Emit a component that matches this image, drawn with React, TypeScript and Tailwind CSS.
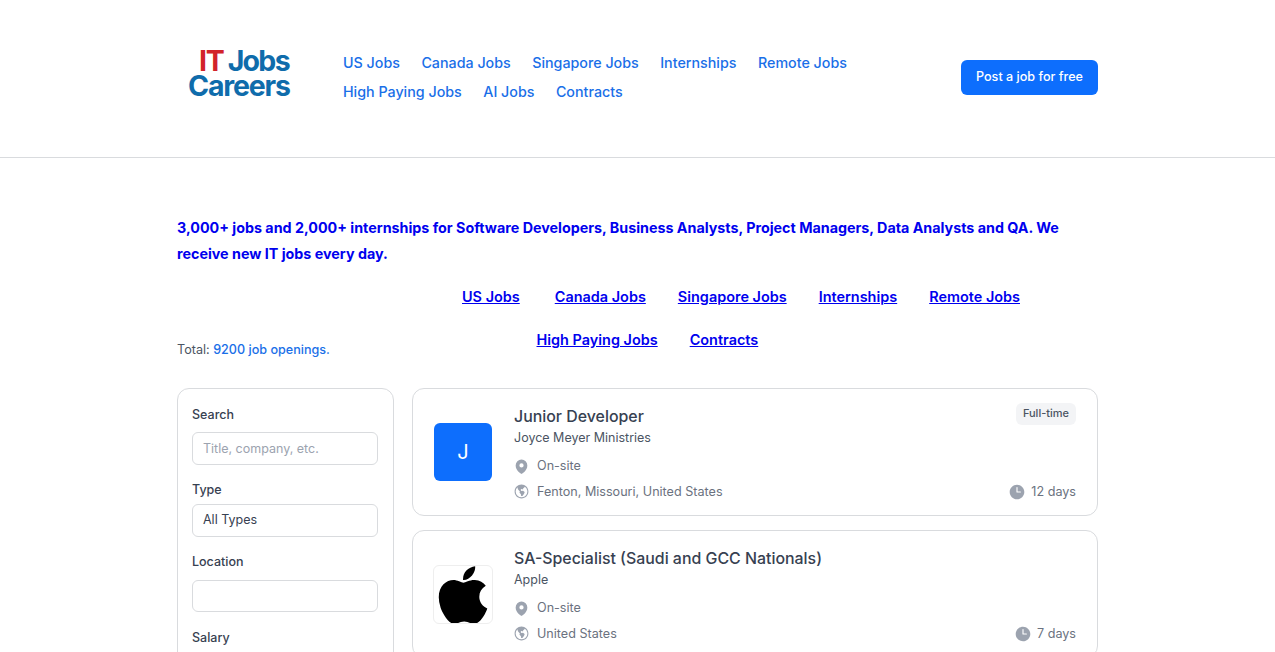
import { HiMapPin, HiGlobeAmericas, HiClock } from "react-icons/hi2";
import { FaApple } from "react-icons/fa";

const navRow1 = ["US Jobs", "Canada Jobs", "Singapore Jobs", "Internships", "Remote Jobs"];
const navRow2 = ["High Paying Jobs", "AI Jobs", "Contracts"];

function Field({ label, children, labelClass }: { label: string; children: React.ReactNode; labelClass: string }) {
  return (
    <div>
      <div className={`text-[12.5px] leading-[20px] font-medium text-[#374151] ${labelClass}`}>{label}</div>
      {children}
    </div>
  );
}

function JobCard({ title, company, place, age, badge, logo }: { title: string; company: string; place: string; age: string; badge?: string; logo: React.ReactNode }) {
  return (
    <div className="relative flex h-[128px] shrink-0 rounded-xl border border-[#d9dbde] bg-white pl-[21px] pr-[21px]">
      <div className="mt-[34px] w-[59px] mr-[21px] shrink-0">{logo}</div>
      <div className="flex-1 pt-[17px]">
        <div className="text-[15.9px] leading-[22px] font-medium text-[#374151]">{title}</div>
        <div className="text-[12.5px] leading-[20px] text-[#4b5563]">{company}</div>
        <div className="mt-[8px] flex h-[20px] items-center text-[12.6px] text-[#6b7280]">
          <HiMapPin className="mr-[7px] -ml-[1px] h-[17px] w-[17px] text-[#9ca3af]" />
          On-site
        </div>
        <div className="mt-[6px] flex h-[20px] items-center justify-between text-[12.6px] text-[#6b7280]">
          <span className="flex items-center">
            <HiGlobeAmericas className="mr-[7px] -ml-[1px] h-[17px] w-[17px] text-[#9ca3af]" />
            {place}
          </span>
          <span className="flex items-center">
            <HiClock className="mr-[5px] h-[18px] w-[18px] text-[#9ca3af]" />
            {age}
          </span>
        </div>
      </div>
      {badge && (
        <div className="absolute right-[21px] top-[14px] rounded-md bg-[#f3f4f6] px-[7px] pt-[1px] pb-[3px] text-[11px] leading-[18px] font-medium text-[#4b5563]">
          {badge}
        </div>
      )}
    </div>
  );
}

export default function App() {
  return (
    <div className="h-[652px] overflow-hidden bg-white font-['Inter',sans-serif]">
      <header className="h-[158px] border-b border-[#d9dbde]">
        <div className="mx-auto flex w-[921px] items-start">
          <div className="mt-[48px] ml-[11px] w-[155px] shrink-0 font-bold text-[#0f6cab] text-[28.5px] leading-[25px] tracking-[-1.2px]">
            <div className="ml-[11px]"><span className="text-[#d2232a]">IT</span><span className="ml-[4px] tracking-[-1.7px]">Jobs</span></div>
            <div>Careers</div>
          </div>
          <nav className="mt-[48px] w-[560px] text-[14.27px] font-medium leading-[29px] text-[#1a6fe8]">
            <div className="flex gap-[21.5px]">{navRow1.map((n) => <span key={n}>{n}</span>)}</div>
            <div className="flex gap-[21.5px]">{navRow2.map((n) => <span key={n}>{n}</span>)}</div>
          </nav>
          <button className="mt-[60px] ml-auto h-[35px] w-[137px] rounded-md bg-[#0d6efd] text-[12.6px] font-medium text-white">
            Post a job for free
          </button>
        </div>
      </header>

      <main className="mx-auto w-[921px]">
        <p className="mt-[57px] text-[14.3px] font-bold leading-[26px] text-[#0000ee]">
          3,000+ jobs and 2,000+ internships for Software Developers, Business Analysts, Project Managers, Data Analysts and QA. We receive new IT jobs every day.
        </p>
        <div className="relative">
          <div className="mt-[17px] ml-[285px] flex gap-[32px] text-[14.45px] leading-[26px] font-semibold text-[#0000ee] underline">
            <span className="mr-[3px]">US Jobs</span><span>Canada Jobs</span><span>Singapore Jobs</span><span>Internships</span><span>Remote Jobs</span>
          </div>
          <div className="mt-[17px] ml-[359.5px] flex gap-[32px] text-[14.45px] leading-[26px] font-semibold text-[#0000ee] underline">
            <span>High Paying Jobs</span><span>Contracts</span>
          </div>
          <div className="absolute left-0 top-[56px] text-[12.6px] leading-[20px] text-[#4b5563]">
            Total: <span className="font-medium text-[#1a6fe8]">9200 job openings.</span>
          </div>
        </div>

        <div className="mt-[35px] flex gap-[18px]">
          <aside className="h-[400px] w-[217px] shrink-0 rounded-xl border border-[#d9dbde] pl-[14px] pr-[15px] pt-[16px]">
            <Field label="Search" labelClass="mb-[7px]">
              <div className="flex h-[33px] items-center rounded-md border border-[#d9dbde] px-[10px] pt-[1px] text-[12.5px] text-[#9ca3af]">Title, company, etc.</div>
            </Field>
            <div className="mt-[15px]">
              <Field label="Type" labelClass="mb-[4px]">
                <div className="flex h-[33px] items-center rounded-md border border-[#d9dbde] px-[10px] text-[12.5px] text-[#374151]">All Types</div>
              </Field>
            </div>
            <div className="mt-[15px]">
              <Field label="Location" labelClass="mb-[8px]">
                <div className="h-[32px] rounded-md border border-[#d9dbde]" />
              </Field>
            </div>
            <div className="mt-[16px]">
              <Field label="Salary" labelClass=""><div /></Field>
            </div>
          </aside>
          <section className="flex flex-1 flex-col gap-[14px]">
            <JobCard
              title="Junior Developer"
              company="Joyce Meyer Ministries"
              place="Fenton, Missouri, United States"
              age="12 days"
              badge="Full-time"
              logo={<div className="flex h-[58px] w-[58px] items-center justify-center rounded-md bg-[#0d6efd] text-[20px] text-white">J</div>}
            />
            <JobCard
              title="SA-Specialist (Saudi and GCC Nationals)"
              company="Apple"
              place="United States"
              age="7 days"
              logo={<div className="-ml-[1px] flex h-[59px] w-[60px] items-center justify-center overflow-hidden rounded-md border border-[#eeeeee] bg-white"><FaApple className="h-[66px] w-[66px] shrink-0 text-black" /></div>}
            />
          </section>
        </div>
      </main>
    </div>
  );
}
